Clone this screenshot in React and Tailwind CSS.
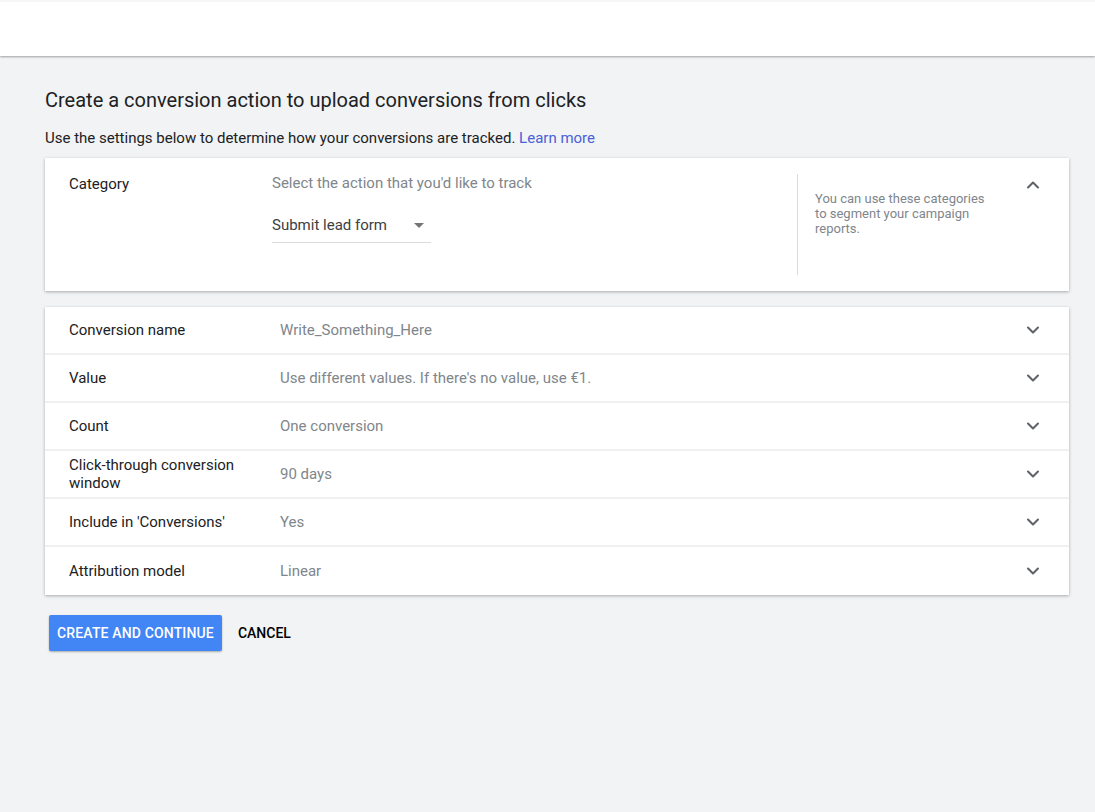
import { ChevronDown, ChevronUp } from "lucide-react";

const rows = [
  { label: "Conversion name", value: "Write_Something_Here" },
  { label: "Value", value: "Use different values. If there's no value, use €1." },
  { label: "Count", value: "One conversion" },
  { label: "Click-through conversion window", value: "90 days" },
  { label: "Include in 'Conversions'", value: "Yes" },
  { label: "Attribution model", value: "Linear" },
];

function Chevron({ up }) {
  const Icon = up ? ChevronUp : ChevronDown;
  return <Icon size={20} strokeWidth={2.5} className="text-[#5f6368]" />;
}

export default function App() {
  return (
    <div
      className="min-h-screen bg-[#f1f3f4] text-[#202124]"
      style={{ fontFamily: "Roboto, 'Liberation Sans', sans-serif" }}
    >
      <header className="h-[56px] bg-white border-t-2 border-[#f6f6f6] shadow-[0_1px_2px_rgba(0,0,0,0.35)]" />

      <main className="px-[45px] pr-[26px]">
        <h1 className="mt-[30px] text-[20px] leading-[28px] text-[#202124]">
          Create a conversion action to upload conversions from clicks
        </h1>
        <p className="mt-[14px] text-[15px] leading-[20px] text-[#202124]">
          Use the settings below to determine how your conversions are tracked.{" "}
          <span className="text-[#4b5fd6]">Learn more</span>
        </p>

        {/* category card */}
        <section className="mt-[10px] bg-white shadow-[0_1px_3px_rgba(0,0,0,0.3)] flex py-4">
          <div className="w-[227px] pl-6 text-[15px] leading-[20px]">Category</div>
          <div className="flex-1 min-h-[101px]">
            <p className="text-[15px] leading-[20px] text-[#80868b] -mt-px">
              Select the action that you'd like to track
            </p>
            <div className="mt-[21px] w-[159px] h-[29px] border-b border-[#dadce0] flex items-start justify-between">
              <span className="text-[15px] leading-[22px] text-[#3c4043]">Submit lead form</span>
              <span className="mt-[9px] mr-[7px] w-0 h-0 border-l-[5px] border-r-[5px] border-t-[5px] border-l-transparent border-r-transparent border-t-[#757575]" />
            </div>
          </div>
          <div className="w-px bg-[#dadce0]" />
          <div className="w-[271px] flex justify-between pl-[17px] pr-[26px]">
            <p className="pt-[17px] w-[182px] text-[13px] leading-[15px] text-[#80868b]">
              You can use these categories to segment your campaign reports.
            </p>
            <div className="pt-[1px]">
              <Chevron up />
            </div>
          </div>
        </section>

        {/* settings card */}
        <section className="mt-[16px] bg-white shadow-[0_1px_3px_rgba(0,0,0,0.3)]">
          {rows.map((r, i) => (
            <div
              key={r.label}
              className={`h-[48px] flex items-center pl-6 pr-[26px] ${
                i < rows.length - 1 ? "border-b-2 border-[#f1f1f1]" : ""
              }`}
            >
              <div className="w-[211px] pr-4 text-[15px] leading-[18px]">{r.label}</div>
              <div className="flex-1 text-[15px] leading-[20px] text-[#80868b]">{r.value}</div>
              <Chevron />
            </div>
          ))}
        </section>

        <div className="mt-[20px] ml-[4px] flex items-center gap-4">
          <button className="h-[36px] px-[8px] bg-[#4285f4] text-white text-[14px] tracking-[0.15px] font-medium rounded-[2px] shadow-[0_1px_2px_rgba(0,0,0,0.3)]">
            CREATE AND CONTINUE
          </button>
          <button className="h-[36px] text-[14px] font-medium text-[#000]">CANCEL</button>
        </div>
      </main>
    </div>
  );
}
